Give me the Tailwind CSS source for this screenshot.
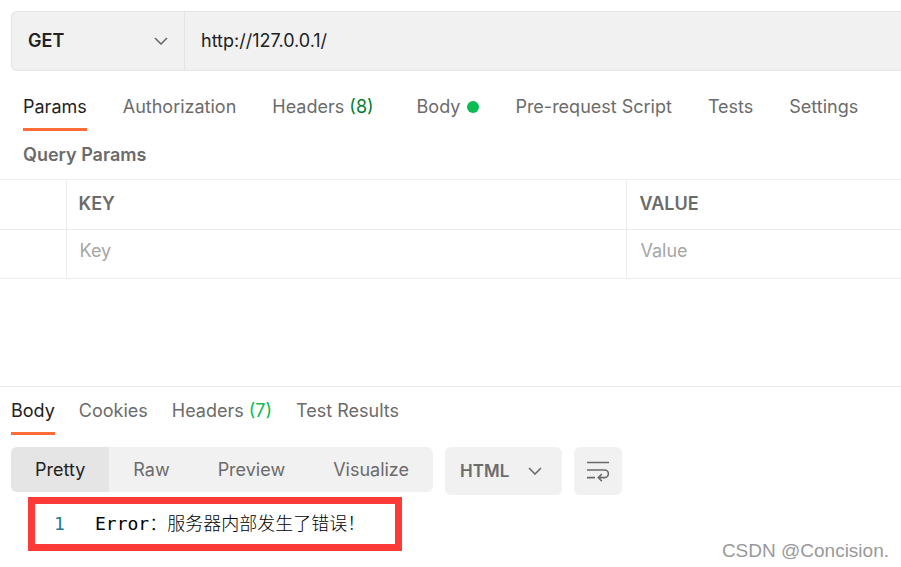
<!DOCTYPE html>
<html lang="zh-CN">
<head>
    <meta charset="UTF-8">
    <meta name="viewport" content="width=device-width, initial-scale=1.0">
    <title>http://127.0.0.1/</title>
    <script src="https://cdn.jsdelivr.net/npm/@tailwindcss/browser@4"></script>
</head>
<body class="bg-white text-[#6b6b6b] font-['Inter','Noto_Sans_CJK_SC',sans-serif] text-lg leading-6 overflow-hidden">
    <div class="flex flex-col min-h-screen relative">
        <!-- Request line -->
        <form class="flex h-15 mt-[11px] ml-[11px] bg-[#f1f1f1] border border-r-0 border-[#e4e4e4] rounded-l-md text-[#212121]">
            <div class="relative w-[173px] shrink-0 border-r border-[#e4e4e4]">
                <select aria-label="Method" class="appearance-none w-full h-full pl-4 pr-10 font-semibold outline-none">
                    <option>GET</option>
                    <option>POST</option>
                    <option>PUT</option>
                    <option>DELETE</option>
                </select>
                <svg class="absolute right-4 top-[25px] w-3.5 h-2 pointer-events-none" viewBox="0 0 14 8" fill="none" stroke="#6b6b6b" stroke-width="1.6"><path d="M1 1l6 6 6-6"/></svg>
            </div>
            <input type="text" aria-label="Request URL" value="http://127.0.0.1/" class="flex-1 min-w-0 px-4 outline-none">
        </form>

        <!-- Request tabs -->
        <nav class="flex gap-9 mt-6 pl-[23px] whitespace-nowrap">
            <button class="pb-[9px] border-b-3 border-[#ff6c37] text-[#212121]">Params</button>
            <button class="pb-3">Authorization</button>
            <button class="pb-3 pr-[7px]">Headers <span class="text-[#007f31]">(8)</span></button>
            <button class="pb-3 flex items-center gap-[7px]">Body <span class="w-3 h-3 rounded-full bg-[#0cbb52]"></span></button>
            <button class="pb-3">Pre-request Script</button>
            <button class="pb-3">Tests</button>
            <button class="pb-3">Settings</button>
        </nav>

        <!-- Query params -->
        <h2 class="mt-3 pl-[23px] font-semibold">Query Params</h2>
        <table class="mt-3 w-full table-fixed border-collapse border-y border-[#ededed] text-left">
            <thead>
                <tr class="h-[50px] border-b border-[#ededed]">
                    <th class="w-[66px]"></th>
                    <th class="w-[560px] pl-3 pb-0.5 border-l border-[#ededed] font-semibold">KEY</th>
                    <th class="pl-[13px] pb-0.5 border-l border-[#ededed] font-semibold">VALUE</th>
                </tr>
            </thead>
            <tbody>
                <tr class="h-[49px]">
                    <td></td>
                    <td class="pl-[13px] pb-1.5 border-l border-[#ededed]"><input type="text" aria-label="Key" placeholder="Key" class="block w-full h-6 outline-none placeholder:text-[#a6a6a6]"></td>
                    <td class="pl-3.5 pb-1.5 border-l border-[#ededed]"><input type="text" aria-label="Value" placeholder="Value" class="block w-full h-6 outline-none placeholder:text-[#a6a6a6]"></td>
                </tr>
            </tbody>
        </table>

        <!-- Response -->
        <section class="mt-[107px] border-t border-[#ededed] pl-[11px] pt-3">
            <nav class="flex gap-6 whitespace-nowrap">
                <button class="pb-[9px] border-b-3 border-[#ff6c37] text-[#212121]">Body</button>
                <button class="pb-3">Cookies</button>
                <button class="pb-3">Headers <span class="text-[#0cbb52]">(7)</span></button>
                <button class="pb-3">Test Results</button>
            </nav>

            <div class="flex items-start gap-3 mt-3">
                <div class="flex h-[45px] bg-[#f1f1f1] rounded-md overflow-hidden">
                    <button class="px-6 bg-[#e5e5e5] text-[#212121]">Pretty</button>
                    <button class="px-6">Raw</button>
                    <button class="px-6">Preview</button>
                    <button class="px-6">Visualize</button>
                </div>
                <div class="relative w-[117px] h-12 bg-[#f1f1f1] rounded-md">
                    <select aria-label="Response format" class="appearance-none w-full h-full pl-[15px] pr-10 text-[17px] font-semibold outline-none">
                        <option>HTML</option>
                        <option>JSON</option>
                        <option>XML</option>
                        <option>Text</option>
                    </select>
                    <svg class="absolute right-5 top-5 w-3.5 h-2 pointer-events-none" viewBox="0 0 14 8" fill="none" stroke="#6b6b6b" stroke-width="1.6"><path d="M1 1l6 6 6-6"/></svg>
                </div>
                <button aria-label="Wrap lines" class="flex items-center justify-center w-12 h-12 bg-[#f1f1f1] rounded-md">
                    <svg class="w-6 h-6" viewBox="0 0 24 24" fill="none" stroke="#6b6b6b" stroke-width="1.6"><path d="M1 3.5h22M1 11h17.6a3.8 3.8 0 0 1 0 7.6H12.5M1 18.6h8M15.9 15l-3.6 3.6 3.6 3.6"/></svg>
                </button>
            </div>

            <!-- Response body -->
            <pre class="flex items-center w-[374px] h-[54px] mt-0.5 ml-[17px] pl-[19px] border-7 border-[#fc3a38] text-black font-['DejaVu_Sans_Mono','Noto_Sans_CJK_SC',monospace]"><span class="w-[41px] text-[#237893]">1</span><code class="font-['DejaVu_Sans_Mono','Noto_Sans_CJK_SC',monospace] font-light">Error：服务器内部发生了错误！</code></pre>
        </section>

        <p class="absolute right-3 bottom-1 text-[#999] text-[19px] font-['Liberation_Sans',sans-serif]">CSDN @Concision.</p>
    </div>
</body>
</html>
